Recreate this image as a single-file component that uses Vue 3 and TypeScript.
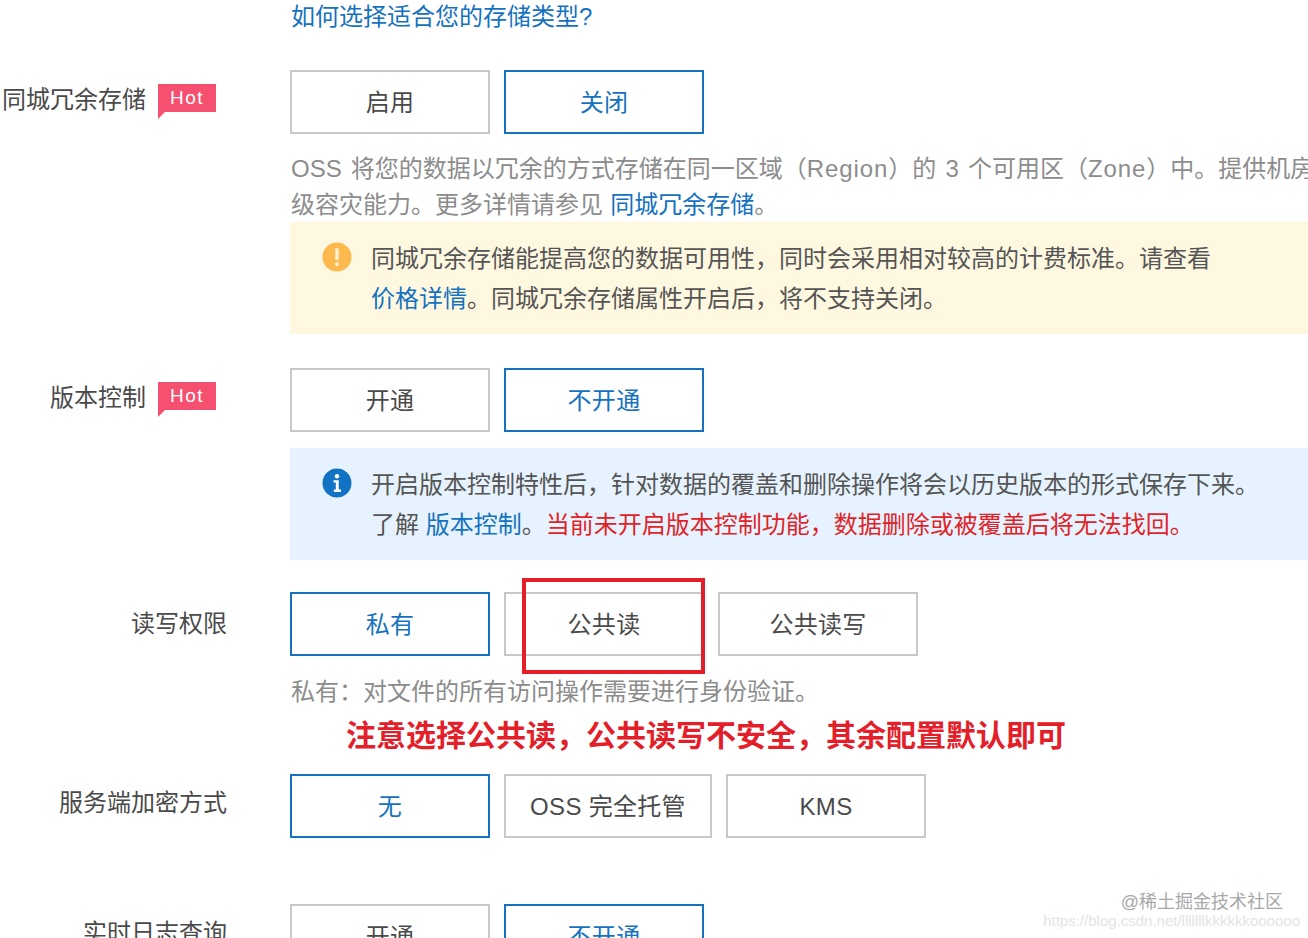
<script setup lang="ts">
interface Opt { text: string; active?: boolean; wide?: boolean }
const row1: Opt[] = [{ text: '启用' }, { text: '关闭', active: true }]
const row2: Opt[] = [{ text: '开通' }, { text: '不开通', active: true }]
const row3: Opt[] = [{ text: '私有', active: true }, { text: '公共读' }, { text: '公共读写' }]
const row4: Opt[] = [{ text: '无', active: true }, { text: 'OSS 完全托管', wide: true }, { text: 'KMS' }]
const row5: Opt[] = [{ text: '开通' }, { text: '不开通', active: true }]
</script>

<template>
  <div class="page">
    <div class="row top">
      <div></div>
      <a class="link">如何选择适合您的存储类型?</a>
    </div>

    <div class="row r1">
      <div class="label hot-label">同城冗余存储<span class="hot">Hot</span></div>
      <div>
        <div class="btns">
          <div v-for="o in row1" :key="o.text" class="btn" :class="{ active: o.active }">{{ o.text }}</div>
        </div>
        <div class="help">OSS 将您的数据以冗余的方式存储在同一区域（<span class="lat">Region</span>）的 3 个可用区（<span class="lat">Zone</span>）中。提供机房<br />级容灾能力。更多详情请参见 <a class="link">同城冗余存储</a>。</div>
        <div class="alert warn">
          <svg class="icon" viewBox="0 0 30 30" width="30" height="30">
            <circle cx="15" cy="15" r="14.5" fill="#fdb94e" />
            <rect x="13.2" y="6" width="3.6" height="12.5" rx="1.8" fill="#fff1d0" />
            <circle cx="15" cy="22.3" r="2" fill="#fff1d0" />
          </svg>
          <div>同城冗余存储能提高您的数据可用性，同时会采用相对较高的计费标准。请查看<br /><a class="link">价格详情</a>。同城冗余存储属性开启后，将不支持关闭。</div>
        </div>
      </div>
    </div>

    <div class="row r2">
      <div class="label hot-label">版本控制<span class="hot">Hot</span></div>
      <div>
        <div class="btns">
          <div v-for="o in row2" :key="o.text" class="btn" :class="{ active: o.active }">{{ o.text }}</div>
        </div>
        <div class="alert info">
          <svg class="icon" viewBox="0 0 30 30" width="30" height="30">
            <circle cx="15" cy="15" r="14.5" fill="#1272c4" />
            <circle cx="15" cy="8.2" r="2.2" fill="#fff" />
            <path d="M11.5 12.2h5.2v9.4h2.2v2.4h-7v-2.4h1.9v-7h-2.3z" fill="#fff" />
          </svg>
          <div>开启版本控制特性后，针对数据的覆盖和删除操作将会以历史版本的形式保存下来。<br />了解 <a class="link">版本控制</a>。<span class="red">当前未开启版本控制功能，数据删除或被覆盖后将无法找回。</span></div>
        </div>
      </div>
    </div>

    <div class="row r3">
      <div class="label low">读写权限</div>
      <div>
        <div class="btns">
          <div v-for="o in row3" :key="o.text" class="btn" :class="{ active: o.active }">{{ o.text }}</div>
          <div class="mark"></div>
        </div>
        <div class="help single">私有：对文件的所有访问操作需要进行身份验证。</div>
        <div class="callout">注意选择公共读，公共读写不安全，其余配置默认即可</div>
      </div>
    </div>

    <div class="row r4">
      <div class="label">服务端加密方式</div>
      <div class="btns">
        <div v-for="o in row4" :key="o.text" class="btn" :class="{ active: o.active, wide: o.wide }">{{ o.text }}</div>
      </div>
    </div>

    <div class="row r5">
      <div class="label">实时日志查询</div>
      <div class="btns">
        <div v-for="o in row5" :key="o.text" class="btn" :class="{ active: o.active }">{{ o.text }}</div>
      </div>
    </div>

    <div class="watermark">
      <div class="wm1">@稀土掘金技术社区</div>
      <div class="wm2">https://blog.csdn.net/lllllllkkkkkkoooooo</div>
    </div>
  </div>
</template>

<style>
html, body { margin: 0; background: #fff; overflow: hidden; }
</style>

<style scoped>
.page {
  position: relative;
  width: 1308px;
  height: 938px;
  overflow: hidden;
  background: #fff;
  color: #4a4a4a;
  font-family: "Liberation Sans", "Noto Sans CJK SC", sans-serif;
  font-size: 24px;
  line-height: 36px;
}
.row {
  display: grid;
  grid-template-columns: 290px 1060px;
}
.top { line-height: 34px; padding-left: 1px; }
.r1 { margin-top: 36px; }
.r2 { margin-top: 34px; }
.r3 { margin-top: 32px; }
.r4 { margin-top: 20px; }
.r5 { margin-top: 66px; }
.link { color: #1572c0; }
.label {
  display: flex;
  justify-content: flex-end;
  align-items: flex-start;
  padding: 11px 63px 0 0;
  line-height: 36px;
  color: #4a4a4a;
}
.label.low { padding-top: 14px; }
.hot-label { padding: 12px 74px 0 0; }
.hot {
  position: relative;
  width: 58px;
  height: 28px;
  margin: 2px 0 0 12px;
  background: #f5506f;
  color: #fff;
  font-size: 19px;
  line-height: 28px;
  letter-spacing: 1.4px;
  text-align: center;
}
.hot::after {
  content: "";
  position: absolute;
  left: 0;
  top: 28px;
  border-top: 7px solid #f5506f;
  border-right: 7px solid transparent;
}
.btns {
  position: relative;
  display: flex;
  gap: 14px;
}
.btn {
  box-sizing: border-box;
  width: 200px;
  height: 64px;
  padding-top: 2px;
  border: 2px solid #c8c8c8;
  display: flex;
  align-items: center;
  justify-content: center;
  color: #4a4a4a;
  letter-spacing: 0.3px;
}
.btn.wide { width: 208px; }
.btn.active { border-color: #1572c0; color: #1572c0; }
.help {
  margin-top: 17px;
  color: #8c8c8c;
  padding-left: 1px;
  word-spacing: 2.5px;
}
.lat { letter-spacing: 0.9px; }
.help .link { color: #1572c0; margin-left: -2px; }
.help.single { margin-top: 18px; }
.alert {
  display: flex;
  gap: 19px;
  box-sizing: border-box;
  margin-top: 16px;
  height: 112px;
  padding: 17px 0 0 32px;
  line-height: 40px;
  color: #555;
}
.alert .icon { flex: none; margin-top: 3px; }
.warn { margin-top: -1px; background: #fff8e1; }
.info { background: #e6f3fe; }
.red { color: #e02328; }
.callout {
  margin-top: 8px;
  padding-left: 56px;
  font-size: 30px;
  line-height: 36px;
  font-weight: 700;
  color: #e3202a;
}
.mark {
  position: absolute;
  left: 232px;
  top: -14px;
  width: 183px;
  height: 96px;
  box-sizing: border-box;
  border: 4px solid #e3202a;
}
.watermark {
  position: absolute;
  right: 8px;
  top: 890px;
  text-align: right;
}
.wm1 { font-size: 18px; line-height: 24px; color: #a8a8a8; padding-right: 17px; }
.wm2 { font-size: 15px; line-height: 14px; color: #e4e4e4; }
</style>
